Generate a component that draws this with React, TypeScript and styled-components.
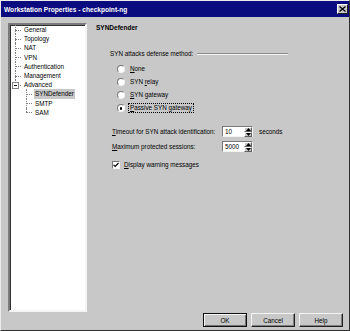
import * as React from 'react'
import styled, { createGlobalStyle } from 'styled-components'

const Global = createGlobalStyle`
  html, body {
    margin: 0;
    padding: 0;
    background: #c8c8c8;
  }
  body {
    font-family: "Liberation Sans", Arial, sans-serif;
    font-size: 6.3px;
    color: #000;
  }
`

const Window = styled.div`
  width: 350px;
  height: 331px;
  box-sizing: border-box;
  background: #c8c8c8;
  border: 1px solid;
  border-color: #ececec #303030 #303030 #ececec;
  display: flex;
  flex-direction: column;
`

const TitleBar = styled.div`
  height: 16px;
  margin: 0 0 0 0;
  background: #0b0b80;
  color: #fff;
  font-weight: bold;
  font-size: 6.6px;
  display: flex;
  align-items: center;
  justify-content: space-between;
  padding-left: 3px;
`

const CloseButton = styled.div`
  width: 11px;
  height: 10px;
  margin-right: 1px;
  box-sizing: border-box;
  background: #c8c8c8;
  border: 1px solid;
  border-color: #fff #202020 #202020 #fff;
  display: flex;
  align-items: center;
  justify-content: center;
`

const Body = styled.div`
  display: flex;
  margin-top: 6px;
  padding: 0 7px;
  height: 289px;
`

const Tree = styled.div`
  width: 79px;
  box-sizing: border-box;
  background: #fff;
  border: 2px solid;
  border-color: #7a7a7a #f4f4f4 #f4f4f4 #7a7a7a;
  box-shadow: inset 1px 1px 0 #303030;
`

const TreeRow = styled.div<{ $level: number; $last?: boolean; $branch?: boolean }>`
  position: relative;
  height: 9.2px;
  line-height: 9.2px;
  padding-left: ${p => (p.$level === 0 ? 13 : 24)}px;
  white-space: nowrap;

  &::before {
    content: '';
    position: absolute;
    left: ${p => (p.$level === 0 ? 5 : 16)}px;
    top: 0;
    height: ${p => (p.$last ? '50%' : '100%')};
    border-left: 1px dotted #808080;
  }
  &::after {
    content: '';
    position: absolute;
    left: ${p => (p.$level === 0 ? 5 : 16)}px;
    top: 50%;
    width: 6px;
    border-top: 1px dotted #808080;
  }
`

const ChildLine = styled.div`
  position: relative;
  &::before {
    content: '';
    position: absolute;
    left: 5px;
    top: 0;
    bottom: 0;
    border-left: 1px dotted #808080;
  }
`

const Expander = styled.span`
  position: absolute;
  left: 2px;
  top: 1.6px;
  width: 7px;
  height: 7px;
  box-sizing: border-box;
  background: #fff;
  border: 1px solid #808080;
  z-index: 1;
  &::after {
    content: '';
    position: absolute;
    left: 1px;
    top: 2px;
    width: 3px;
    border-top: 1px solid #000;
  }
`

const TreeLabel = styled.span<{ $selected?: boolean }>`
  display: inline-block;
  padding: 0 1px;
  background: ${p => (p.$selected ? '#c8c8c8' : 'transparent')};
`

const Content = styled.div`
  flex: 1;
  margin-left: 9px;
  display: flex;
  flex-direction: column;
`

const Heading = styled.div`
  font-weight: bold;
  font-size: 6.5px;
  line-height: 9px;
`

const GroupHeader = styled.div`
  display: flex;
  align-items: center;
  margin: 17px 0 0 14px;
  width: 178px;
  line-height: 9px;
  gap: 4px;
  &::after {
    content: '';
    flex: 1;
    border-top: 1px solid #8a8a8a;
    border-bottom: 1px solid #f4f4f4;
  }
`

const RadioList = styled.div`
  display: flex;
  flex-direction: column;
  gap: 4.3px;
  margin: 6px 0 0 21px;
`

const RadioRow = styled.div`
  display: flex;
  align-items: center;
  gap: 4px;
  height: 9px;
`

const RadioCircle = styled.span<{ $checked?: boolean }>`
  width: 8px;
  height: 8px;
  box-sizing: border-box;
  border-radius: 50%;
  background: #fff;
  border: 1px solid;
  border-color: #7a7a7a #f4f4f4 #f4f4f4 #7a7a7a;
  display: flex;
  align-items: center;
  justify-content: center;
  &::after {
    content: '';
    width: 2.5px;
    height: 2.5px;
    border-radius: 50%;
    background: ${p => (p.$checked ? '#000' : 'transparent')};
  }
`

const Label = styled.span<{ $focused?: boolean }>`
  white-space: nowrap;
  line-height: 8px;
  padding: 0 1px;
  outline: ${p => (p.$focused ? '1px dotted #000' : 'none')};
`

const Mn = styled.span`
  text-decoration: underline;
`

const FieldRow = styled.div<{ $top: number }>`
  display: flex;
  align-items: center;
  margin: ${p => p.$top}px 0 0 16px;
  height: 11px;
`

const FieldLabel = styled.span`
  width: 110px;
  white-space: nowrap;
`

const SpinBox = styled.div`
  width: 31px;
  height: 11px;
  box-sizing: border-box;
  background: #fff;
  border: 1px solid;
  border-color: #7a7a7a #f4f4f4 #f4f4f4 #7a7a7a;
  display: flex;
  align-items: center;
  padding-left: 2px;
`

const SpinValue = styled.span`
  flex: 1;
`

const SpinButtons = styled.div`
  width: 8px;
  height: 9px;
  display: flex;
  flex-direction: column;
`

const SpinButton = styled.div`
  flex: 1;
  background: #c8c8c8;
  box-sizing: border-box;
  border: 1px solid;
  border-color: #fff #606060 #606060 #fff;
  display: flex;
  align-items: center;
  justify-content: center;
`

const Unit = styled.span`
  margin-left: 6px;
`

const CheckRow = styled.div`
  display: flex;
  align-items: center;
  gap: 3px;
  margin: 9px 0 0 16px;
  height: 9px;
`

const CheckBox = styled.span`
  width: 8px;
  height: 8px;
  box-sizing: border-box;
  background: #fff;
  border: 1px solid;
  border-color: #7a7a7a #f4f4f4 #f4f4f4 #7a7a7a;
  display: flex;
  align-items: center;
  justify-content: center;
`

const ButtonBar = styled.div`
  display: flex;
  justify-content: flex-end;
  gap: 4px;
  margin-top: 1px;
  padding-right: 6px;
`

const Button = styled.div<{ $default?: boolean }>`
  width: 44px;
  height: 14px;
  box-sizing: border-box;
  background: #c8c8c8;
  border: 1px solid;
  border-color: ${p => (p.$default ? '#101010' : '#f4f4f4 #202020 #202020 #f4f4f4')};
  box-shadow: ${p => (p.$default ? 'inset 1px 1px 0 #f4f4f4, inset -1px -1px 0 #707070' : 'inset -1px -1px 0 #808080')};
  display: flex;
  align-items: center;
  justify-content: center;
`

const Arrow = ({ up }: { up?: boolean }) => (
  <svg width="5" height="3" viewBox="0 0 5 3">
    <path d={up ? 'M2.5 0 L5 3 L0 3 Z' : 'M0 0 L5 0 L2.5 3 Z'} fill="#000" />
  </svg>
)

const Spinner = ({ value }: { value: string }) => (
  <SpinBox>
    <SpinValue>{value}</SpinValue>
    <SpinButtons>
      <SpinButton><Arrow up /></SpinButton>
      <SpinButton><Arrow /></SpinButton>
    </SpinButtons>
  </SpinBox>
)

export default function App() {
  return (
    <>
      <Global />
      <Window>
        <TitleBar>
          <span>Workstation Properties - checkpoint-ng</span>
          <CloseButton>
            <svg width="7" height="6" viewBox="0 0 7 6">
              <path d="M0.5 0.5 L6.5 5.5 M6.5 0.5 L0.5 5.5" stroke="#000" strokeWidth="1.3" />
            </svg>
          </CloseButton>
        </TitleBar>
        <Body>
          <Tree>
            <TreeRow $level={0}><TreeLabel>General</TreeLabel></TreeRow>
            <TreeRow $level={0}><TreeLabel>Topology</TreeLabel></TreeRow>
            <TreeRow $level={0}><TreeLabel>NAT</TreeLabel></TreeRow>
            <TreeRow $level={0}><TreeLabel>VPN</TreeLabel></TreeRow>
            <TreeRow $level={0}><TreeLabel>Authentication</TreeLabel></TreeRow>
            <TreeRow $level={0}><TreeLabel>Management</TreeLabel></TreeRow>
            <TreeRow $level={0} $last><Expander /><TreeLabel>Advanced</TreeLabel></TreeRow>
            <TreeRow $level={1}><TreeLabel $selected>SYNDefender</TreeLabel></TreeRow>
            <TreeRow $level={1}><TreeLabel>SMTP</TreeLabel></TreeRow>
            <TreeRow $level={1} $last><TreeLabel>SAM</TreeLabel></TreeRow>
          </Tree>
          <Content>
            <Heading>SYNDefender</Heading>
            <GroupHeader>SYN attacks defense method:</GroupHeader>
            <RadioList>
              <RadioRow><RadioCircle /><Label><Mn>N</Mn>one</Label></RadioRow>
              <RadioRow><RadioCircle /><Label>SYN <Mn>r</Mn>elay</Label></RadioRow>
              <RadioRow><RadioCircle /><Label><Mn>S</Mn>YN gateway</Label></RadioRow>
              <RadioRow><RadioCircle $checked /><Label $focused><Mn>P</Mn>assive SYN gateway</Label></RadioRow>
            </RadioList>
            <FieldRow $top={13}>
              <FieldLabel><Mn>T</Mn>imeout for SYN attack identification:</FieldLabel>
              <Spinner value="10" />
              <Unit>seconds</Unit>
            </FieldRow>
            <FieldRow $top={4}>
              <FieldLabel><Mn>M</Mn>aximum protected sessions:</FieldLabel>
              <Spinner value="5000" />
            </FieldRow>
            <CheckRow>
              <CheckBox>
                <svg width="6" height="6" viewBox="0 0 6 6">
                  <path d="M0.5 2.8 L2.2 4.5 L5.5 1" stroke="#000" strokeWidth="1.2" fill="none" />
                </svg>
              </CheckBox>
              <Label><Mn>D</Mn>isplay warning messages</Label>
            </CheckRow>
          </Content>
        </Body>
        <ButtonBar>
          <Button $default>OK</Button>
          <Button>Cancel</Button>
          <Button>Help</Button>
        </ButtonBar>
      </Window>
    </>
  )
}
